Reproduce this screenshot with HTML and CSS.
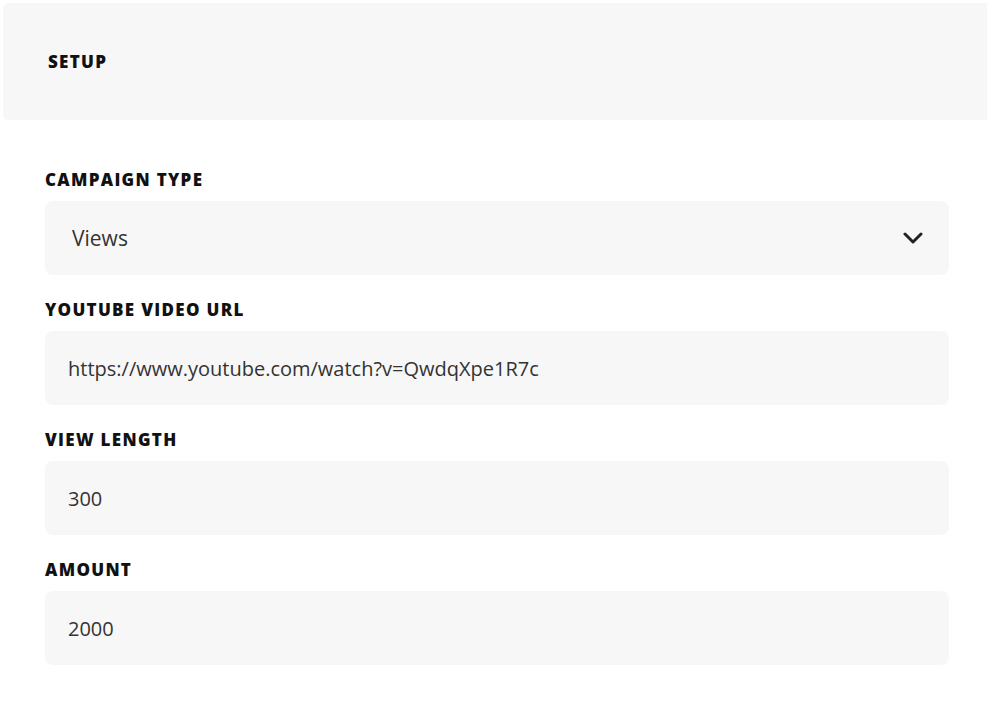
FILE: index.html
```html
<!DOCTYPE html>
<html>
  <head>
    <title>Campaign setup</title>
    <meta charset="utf-8"/>
    <link rel="stylesheet" href="styles.css">
  </head>
  <body>
    <div class="panel-head">SETUP</div>
    <form class="setup-form">
      <div class="field">
        <label class="field-label" for="type">Campaign type</label>
        <div class="select-wrap">
          <select id="type" class="field-input field-select">
            <option>Views</option>
          </select>
          <svg class="chevron" width="20" height="12" viewBox="0 0 20 12">
            <path d="M2 2 L10 10 L18 2" fill="none" stroke="#222" stroke-width="3" stroke-linecap="round" stroke-linejoin="round"/>
          </svg>
        </div>
      </div>
      <div class="field">
        <label class="field-label" for="url">YouTube video URL</label>
        <input id="url" class="field-input" value="https://www.youtube.com/watch?v=QwdqXpe1R7c">
      </div>
      <div class="field">
        <label class="field-label" for="length">View length</label>
        <input id="length" class="field-input" value="300">
      </div>
      <div class="field">
        <label class="field-label" for="amount">Amount</label>
        <input id="amount" class="field-input" value="2000">
      </div>
    </form>
  </body>
</html>
```

FILE: styles.css
```css
body {
  margin: 0;
  overflow: hidden;
  background: #fff;
  color: #222;
  font-family: "Open Sans", "Noto Sans", sans-serif;
}

.panel-head {
  margin: 3px -10px 0 3px;
  height: 117px;
  padding-left: 45px;
  display: flex;
  align-items: center;
  background: #f7f7f7;
  border-radius: 6px;
  font-size: 17px;
  font-weight: 800;
  letter-spacing: 1.3px;
  color: #111;
}

.setup-form {
  padding: 48px 38px 0 45px;
  display: flex;
  flex-direction: column;
  gap: 23px;
}

.field {
  display: flex;
  flex-direction: column;
  gap: 10px;
}

.field-label {
  font-size: 17px;
  font-weight: 800;
  letter-spacing: 1.3px;
  text-transform: uppercase;
  color: #111;
  line-height: 23px;
}

.field-input {
  box-sizing: border-box;
  width: 100%;
  height: 74px;
  padding: 0 23px;
  border: none;
  border-radius: 8px;
  background: #f7f7f7;
  font-family: inherit;
  font-size: 20px;
  color: #333;
  outline: none;
}

.select-wrap {
  position: relative;
}

.field-select {
  appearance: none;
  padding-left: 27px;
  font-size: 21px;
}

.chevron {
  position: absolute;
  right: 26px;
  top: 31px;
  pointer-events: none;
}
```
